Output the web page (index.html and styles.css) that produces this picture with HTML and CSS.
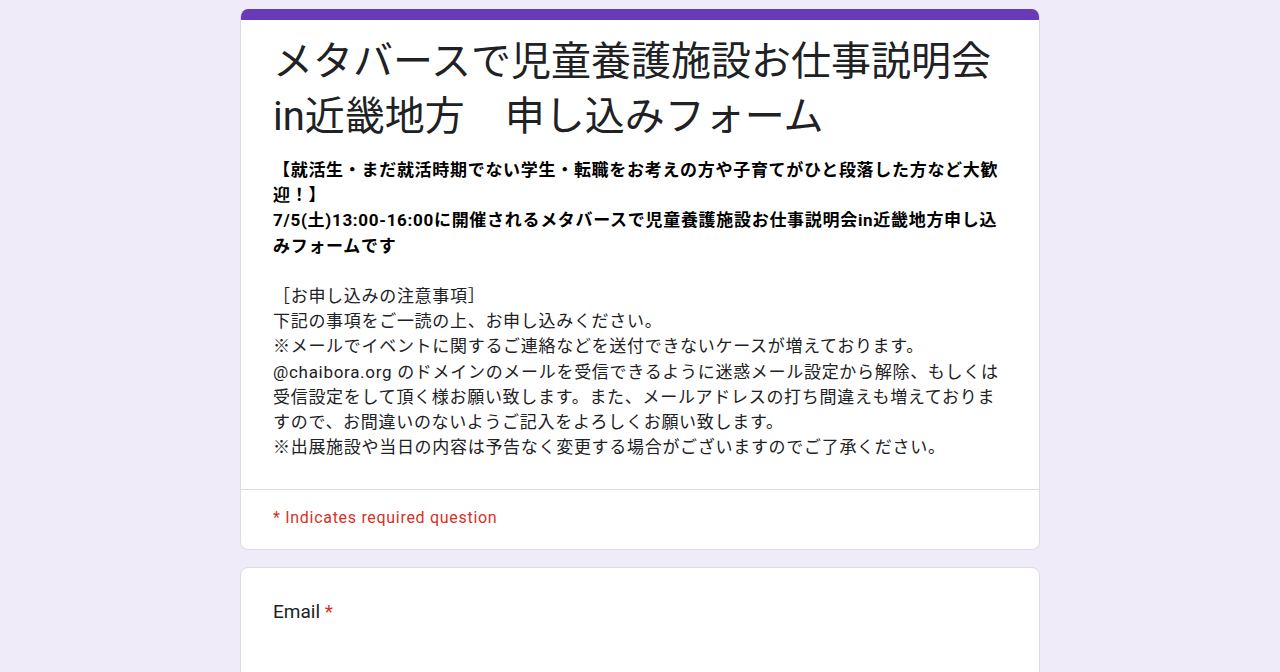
FILE: index.html
```html
<!DOCTYPE html>
<html>
<head>
    <meta charset="utf-8">
    <link rel="stylesheet" href="styles.css">
    <title>メタバースで児童養護施設お仕事説明会in近畿地方　申し込みフォーム</title>
</head>
<body>
    <div class="form-wrap">
        <div class="card head-card">
            <div class="head-bar"></div>
            <div class="head-body">
                <h1 class="form-title">メタバースで児童養護施設お仕事説明会in近畿地方　申し込みフォーム</h1>
                <div class="form-desc">
                    <p class="desc-bold">【就活生・まだ就活時期でない学生・転職をお考えの方や子育てがひと段落した方など大歓迎！】<br>7/5(土)13:00-16:00に開催されるメタバースで児童養護施設お仕事説明会in近畿地方申し込<br>みフォームです</p>
                    <p class="desc-text"><br>［お申し込みの注意事項］<br>下記の事項をご一読の上、お申し込みください。<br>※メールでイベントに関するご連絡などを送付できないケースが増えております。<br>@chaibora.org のドメインのメールを受信できるように迷惑メール設定から解除、もしくは<br>受信設定をして頂く様お願い致します。また、メールアドレスの打ち間違えも増えておりま<br>すので、お間違いのないようご記入をよろしくお願い致します。<br>※出展施設や当日の内容は予告なく変更する場合がございますのでご了承ください。</p>
                </div>
            </div>
            <div class="required-note">* Indicates required question</div>
        </div>

        <div class="card question-card">
            <div class="question-label">Email <span class="star">*</span></div>
        </div>
    </div>
</body>
</html>
```

FILE: styles.css
```css
body {
    margin: 0;
    background-color: #f0ebf8;
    font-family: Roboto, "Noto Sans CJK JP", sans-serif;
    color: #202124;
}
.form-wrap {
    width: 800px;
    margin: 9px auto 0;
    display: flex;
    flex-direction: column;
    gap: 17px;
}
.card {
    background-color: white;
    border: 1px solid #dadce0;
    border-radius: 8px;
    overflow: hidden;
}
.head-card {
    border-top: none;
}
.head-bar {
    height: 11px;
    background-color: #673ab7;
}
.head-body {
    padding: 14px 32px 29px;
    border-bottom: 1px solid #dadce0;
}
.form-title {
    margin: 0;
    font-size: 40px;
    font-weight: 400;
    line-height: 55px;
    color: #202124;
}
.form-desc {
    margin-top: 14px;
    font-size: 17px;
    letter-spacing: 0.7px;
    line-height: 25.2px;
}
.form-desc p {
    margin: 0;
}
.desc-bold {
    font-weight: 700;
    color: #000;
}
.required-note {
    padding: 17px 32px 20px;
    font-size: 16px;
    letter-spacing: 0.7px;
    line-height: 22px;
    color: #d93025;
}
.question-card {
    padding: 32px 32px 60px;
}
.question-label {
    font-size: 19px;
    line-height: 24px;
    color: #202124;
}
.star {
    color: #d93025;
}
```
